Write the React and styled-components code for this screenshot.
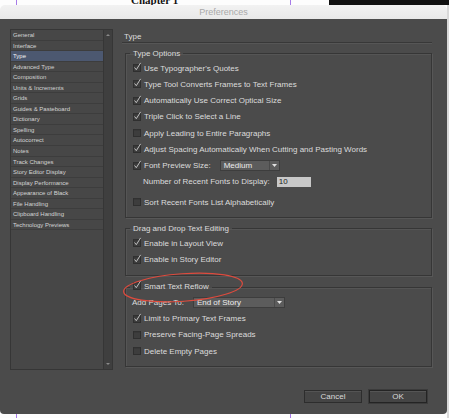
import React from "react";
import styled, { createGlobalStyle } from "styled-components";

const GlobalStyle = createGlobalStyle`
  html, body {
    margin: 0;
    padding: 0;
  }
  body {
    width: 449px;
    height: 418px;
    overflow: hidden;
    font-family: "Liberation Sans", Arial, sans-serif;
  }
`;

const categories = [
  "General",
  "Interface",
  "Type",
  "Advanced Type",
  "Composition",
  "Units & Increments",
  "Grids",
  "Guides & Pasteboard",
  "Dictionary",
  "Spelling",
  "Autocorrect",
  "Notes",
  "Track Changes",
  "Story Editor Display",
  "Display Performance",
  "Appearance of Black",
  "File Handling",
  "Clipboard Handling",
  "Technology Previews",
];

function Checkbox({ checked }) {
  return (
    <CheckIcon width="9" height="10" viewBox="0 0 9 10">
      <rect x="0.5" y="2.5" width="7" height="7" fill="#3d3d3d" stroke="#2f2f2f" />
      <line x1="1" y1="3" x2="7" y2="3" stroke="#353535" />
      {checked && (
        <path
          d="M1.8 5.8 L3.3 7.7 L7.4 1.2"
          fill="none"
          stroke="#cfcfcf"
          strokeWidth="0.9"
          strokeLinecap="round"
          strokeLinejoin="round"
        />
      )}
    </CheckIcon>
  );
}

function Option({ checked, children }) {
  return (
    <Row>
      <Checkbox checked={checked} />
      <span>{children}</span>
    </Row>
  );
}

function Dropdown({ value, width }) {
  return (
    <Select $width={width}>
      <SelectValue>{value}</SelectValue>
      <SelectArrow>
        <svg width="5" height="3" viewBox="0 0 5 3">
          <path d="M0 0 H5 L2.5 3 Z" fill="#e0e0e0" />
        </svg>
      </SelectArrow>
    </Select>
  );
}

export default function App() {
  return (
    <Page>
      <GlobalStyle />
      <TopStrip>
        <ChapterTitle>Chapter 1</ChapterTitle>
      </TopStrip>
      <Dialog>
        <TitleBar>Preferences</TitleBar>
        <Body>
          <Sidebar>
            <List>
              {categories.map((c) => (
                <Item key={c} $selected={c === "Type"}>
                  {c}
                </Item>
              ))}
            </List>
            <Scrollbar>
              <ScrollArrow />
              <ScrollArrow $down />
            </Scrollbar>
          </Sidebar>

          <Content>
            <Header>Type</Header>

            <Group>
              <Legend>Type Options</Legend>
              <Option checked>Use Typographer's Quotes</Option>
              <Option checked>Type Tool Converts Frames to Text Frames</Option>
              <Option checked>Automatically Use Correct Optical Size</Option>
              <Option checked>Triple Click to Select a Line</Option>
              <Option>Apply Leading to Entire Paragraphs</Option>
              <Option checked>
                Adjust Spacing Automatically When Cutting and Pasting Words
              </Option>
              <Row>
                <Checkbox checked />
                <span>Font Preview Size:</span>
                <Spacer $w={5} />
                <Dropdown value="Medium" width={60} />
              </Row>
              <Row $indent>
                <span>Number of Recent Fonts to Display:</span>
                <NumberField>10</NumberField>
              </Row>
              <Row $gap={4}>
                <Checkbox />
                <span>Sort Recent Fonts List Alphabetically</span>
              </Row>
            </Group>

            <Group>
              <Legend>Drag and Drop Text Editing</Legend>
              <Option checked>Enable in Layout View</Option>
              <Option checked>Enable in Story Editor</Option>
            </Group>

            <Group>
              <Legend>
                <LegendInner>
                  <Checkbox checked />
                  <span>Smart Text Reflow</span>
                </LegendInner>
                <Annotation width="126" height="33" viewBox="0 0 126 33">
                  <ellipse
                    cx="63"
                    cy="16.5"
                    rx="59.5"
                    ry="13.8"
                    fill="none"
                    stroke="#de4b3e"
                    strokeWidth="1.2"
                    transform="rotate(-4 63 16.5)"
                  />
                </Annotation>
              </Legend>
              <Row $flush>
                <span>Add Pages To:</span>
                <Spacer $w={5} />
                <Dropdown value="End of Story" width={92} />
              </Row>
              <Option checked>Limit to Primary Text Frames</Option>
              <Option>Preserve Facing-Page Spreads</Option>
              <Option>Delete Empty Pages</Option>
            </Group>
          </Content>

          <Footer>
            <Button>Cancel</Button>
            <Button $default>OK</Button>
          </Footer>
        </Body>
      </Dialog>
    </Page>
  );
}

const Page = styled.div`
  width: 449px;
  height: 418px;
  display: flex;
  flex-direction: column;
  background:
    linear-gradient(#a77be8, #a77be8) 16px 0 / 1px 100% no-repeat,
    linear-gradient(#a77be8, #a77be8) 290px 0 / 1px 100% no-repeat,
    linear-gradient(#111, #111) 329px 0 / 120px 5px no-repeat,
    linear-gradient(#d9d9d9, #d9d9d9) 447px 0 / 2px 100% no-repeat,
    #fdfdfd;
`;

const TopStrip = styled.div`
  height: 5px;
  overflow: hidden;
  padding-left: 131px;
  flex-shrink: 0;
`;

const ChapterTitle = styled.div`
  font: bold 11px/11px "Liberation Serif", "Times New Roman", serif;
  color: #111;
  margin-top: -5px;
`;

const Dialog = styled.div`
  width: 447px;
  height: 409px;
  flex-shrink: 0;
  display: flex;
  flex-direction: column;
  border-radius: 5px 5px 4px 4px;
  overflow: hidden;
`;

const TitleBar = styled.div`
  height: 14px;
  flex-shrink: 0;
  background: linear-gradient(#f2f2f2, #e8e8e8);
  color: #a9a9a9;
  font-size: 9px;
  line-height: 14px;
  text-align: center;
`;

const Body = styled.div`
  flex: 1;
  background: #4b4b4b;
  display: grid;
  grid-template-columns: 103px 310px;
  grid-template-rows: 341px auto;
  column-gap: 9px;
  padding: 10px 0 0 10px;
  color: #dcdcdc;
`;

const Sidebar = styled.div`
  display: flex;
  box-sizing: border-box;
  border: 1px solid #363636;
  background: #474747;
`;

const List = styled.div`
  flex: 1;
  display: flex;
  flex-direction: column;
`;

const Item = styled.div`
  height: 10.56px;
  box-sizing: border-box;
  padding-left: 2px;
  border-bottom: 1px solid #3d3d3d;
  font-size: 6px;
  line-height: 10px;
  white-space: nowrap;
  color: ${(p) => (p.$selected ? "#f2f2f2" : "#d4d4d4")};
  background: ${(p) => (p.$selected ? "#4c5870" : "transparent")};
`;

const Scrollbar = styled.div`
  width: 8px;
  background: #3f3f3f;
  border-left: 1px solid #363636;
  display: flex;
  flex-direction: column;
  justify-content: space-between;
  align-items: center;
  padding: 4px 0;
`;

const ScrollArrow = styled.span`
  width: 0;
  height: 0;
  border-left: 2px solid transparent;
  border-right: 2px solid transparent;
  ${(p) =>
    p.$down
      ? "border-top: 2px solid #8a8a8a;"
      : "border-bottom: 2px solid #8a8a8a;"}
`;

const Content = styled.div`
  display: flex;
  flex-direction: column;
`;

const Header = styled.div`
  height: 14px;
  box-sizing: border-box;
  padding: 1px 0 0 2px;
  display: flex;
  align-items: center;
  font-size: 8px;
  border-bottom: 1px solid #383838;
  box-shadow: 0 1px 0 #565656;
`;

const Group = styled.fieldset`
  margin: 6px 0 0 3px;
  padding: 2px 0 7px 7px;
  min-width: 0;
  border: 1px solid #363636;
  box-shadow: 1px 1px 0 #575757, inset 1px 1px 0 #555;
`;

const Legend = styled.legend`
  position: relative;
  padding: 0 3px;
  margin-left: -3px;
  font-size: 8px;
  line-height: 9px;
  color: #dcdcdc;
`;

const LegendInner = styled.span`
  display: inline-flex;
  align-items: center;
  gap: 2px;
`;

const Annotation = styled.svg`
  position: absolute;
  left: -10px;
  top: -11px;
  pointer-events: none;
`;

const Row = styled.div`
  height: 16.25px;
  display: flex;
  align-items: center;
  gap: 2px;
  font-size: 8px;
  white-space: nowrap;
  padding-left: ${(p) => (p.$indent ? "10px" : "0")};
  margin-left: ${(p) => (p.$flush ? "-1px" : "0")};
  margin-top: ${(p) => (p.$gap ? `${p.$gap}px` : "0")};
`;

const CheckIcon = styled.svg`
  flex-shrink: 0;
  margin-top: -2px;
`;

const Spacer = styled.span`
  width: ${(p) => p.$w}px;
  flex-shrink: 0;
`;

const Select = styled.div`
  display: flex;
  width: ${(p) => p.$width}px;
  height: 11px;
  box-sizing: border-box;
  background: #5c5c5c;
  border: 1px solid #3d3d3d;
  color: #ececec;
  font-size: 8px;
  line-height: 9px;
`;

const SelectValue = styled.span`
  flex: 1;
  padding-left: 3px;
`;

const SelectArrow = styled.span`
  width: 9px;
  border-left: 1px solid #4a4a4a;
  display: flex;
  align-items: center;
  justify-content: center;
`;

const NumberField = styled.div`
  width: 34px;
  height: 10px;
  margin-left: 5px;
  box-sizing: border-box;
  padding-left: 2px;
  background: #c8c8c8;
  color: #1c1c1c;
  font-size: 8px;
  line-height: 10px;
`;

const Footer = styled.div`
  grid-column: 1 / -1;
  display: flex;
  justify-content: flex-end;
  gap: 7px;
  padding: 20px 5px 0 0;
`;

const Button = styled.div`
  width: 58px;
  height: 13px;
  box-sizing: border-box;
  background: #454545;
  border: 1px solid ${(p) => (p.$default ? "#242424" : "#2d2d2d")};
  box-shadow: ${(p) =>
    p.$default
      ? "0 0 0 1px #3b3b3b, inset 0 1px 0 #555"
      : "inset 0 1px 0 #545454"};
  color: #dadada;
  font-size: 8px;
  line-height: 11px;
  text-align: center;
`;
